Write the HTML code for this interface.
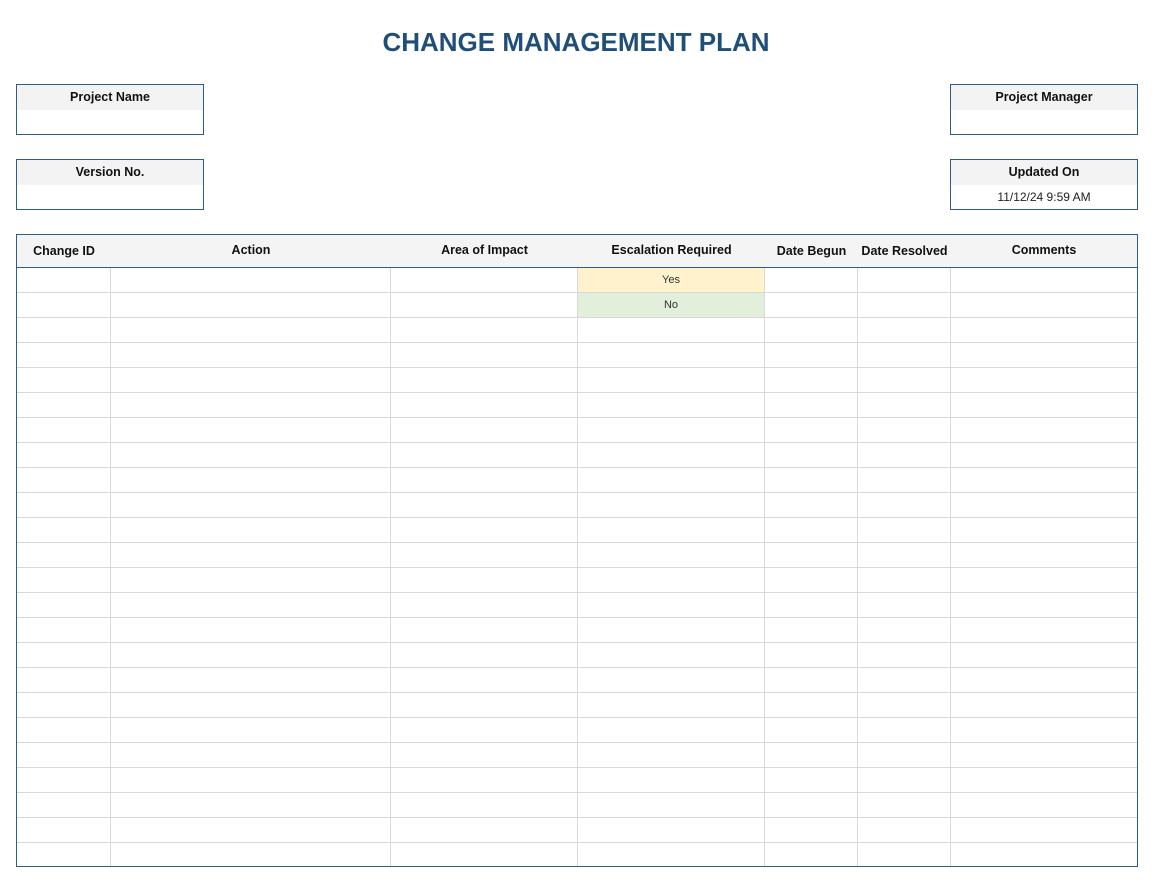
<!DOCTYPE html><html><head><style>
body{margin:0;width:1152px;height:890px;background:#fff;font-family:"Liberation Sans",sans-serif;position:relative;overflow:hidden}
.t{position:absolute;left:0;width:1152px;top:27px;text-align:center;font-size:26px;font-weight:bold;color:#1f4e79;letter-spacing:0}
.box{position:absolute;width:188px;height:51px;border:1px solid #2f5d8a;box-sizing:border-box}
.box .h{height:25px;background:#f3f3f3;text-align:center;font-size:12.5px;font-weight:bold;line-height:25px;color:#111}
.box .v{text-align:center;font-size:12px;line-height:24px;color:#222}
.tb{position:absolute;left:16px;top:234px;width:1122px;height:633px;border:1px solid #2f5d8a;box-sizing:border-box}
.hd{position:absolute;left:0;top:0;width:1120px;height:32px;background:#f4f4f4;border-bottom:1px solid #2f5d8a}
.hc{position:absolute;top:0;line-height:32px;text-align:center;font-size:12.5px;font-weight:bold;color:#111}
.vl{position:absolute;top:33px;width:1px;height:598px;background:#d8d8d8}
.hl{position:absolute;left:0;width:1120px;height:1px;background:#d8d8d8}
.c{position:absolute;left:561px;width:186px;height:24px;text-align:center;font-size:11px;line-height:24px;color:#333}
</style></head><body>
<div class="t">CHANGE MANAGEMENT PLAN</div>
<div class="box" style="left:16px;top:84px"><div class="h">Project Name</div></div>
<div class="box" style="left:16px;top:159px"><div class="h">Version No.</div></div>
<div class="box" style="left:950px;top:84px"><div class="h">Project Manager</div></div>
<div class="box" style="left:950px;top:159px"><div class="h">Updated On</div><div class="v">11/12/24 9:59 AM</div></div>
<div class="tb">
<div class="hd">
<div class="hc" style="left:0;width:94px">Change ID</div>
<div class="hc" style="left:94px;width:280px;line-height:30px">Action</div>
<div class="hc" style="left:374px;width:187px;line-height:30px">Area of Impact</div>
<div class="hc" style="left:561px;width:187px;line-height:30px">Escalation Required</div>
<div class="hc" style="left:748px;width:93px">Date Begun</div>
<div class="hc" style="left:841px;width:93px">Date Resolved</div>
<div class="hc" style="left:934px;width:186px;line-height:30px">Comments</div>
</div>
<div class="c" style="top:33px;background:#fff2cc">Yes</div>
<div class="c" style="top:58px;background:#e2efda">No</div>
<div class="vl" style="left:93px"></div><div class="vl" style="left:373px"></div><div class="vl" style="left:560px"></div><div class="vl" style="left:747px"></div><div class="vl" style="left:840px"></div><div class="vl" style="left:933px"></div>
<div id="rows"></div>
</div>
<script>var r=document.getElementById('rows'),s='';for(var i=1;i<24;i++){s+='<div class="hl" style="top:'+(32+25*i)+'px"></div>';}r.innerHTML=s;</script>
</body></html>
